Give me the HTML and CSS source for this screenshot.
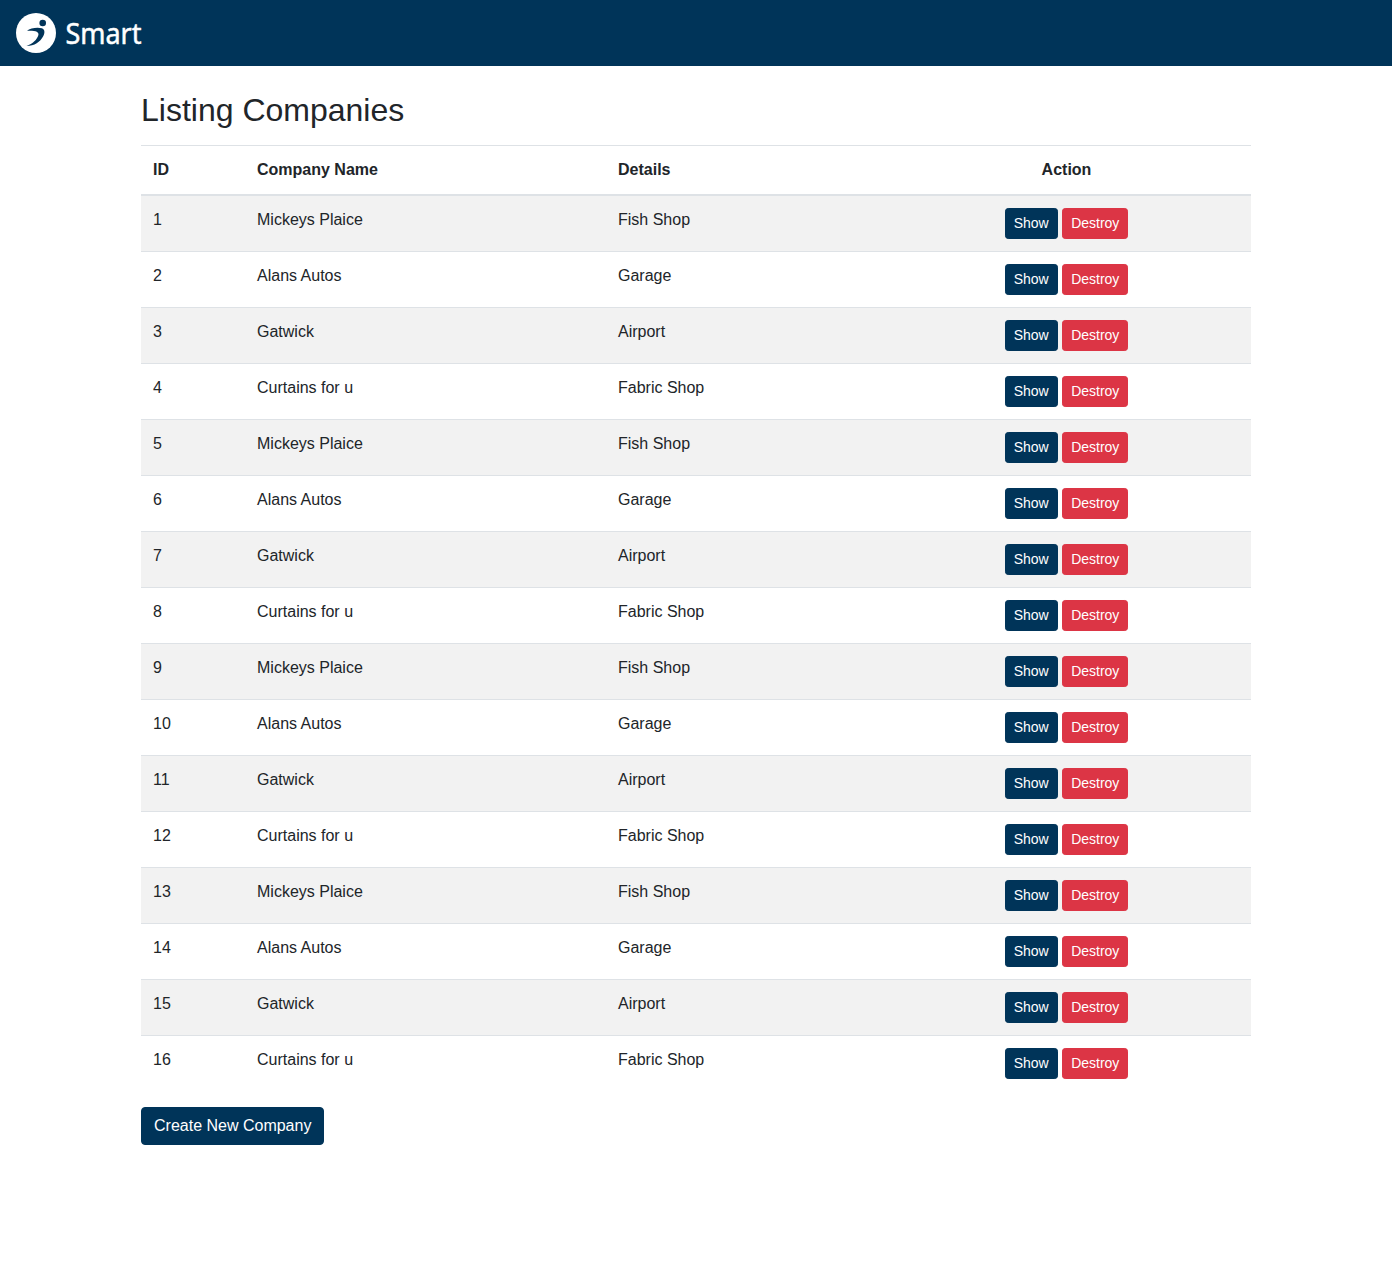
FILE: index.html
```html
<!DOCTYPE html>
<html lang="en">
<head>
<meta charset="utf-8">
<title>Listing Companies</title>
<link rel="stylesheet" href="styles.css">
</head>
<body>
<nav class="navbar">
  <a class="brand" href="#" aria-label="Smart">
    <svg width="130" height="40" viewBox="0 0 130 40">
      <circle cx="20" cy="20" r="20" fill="#fff"/>
      <circle cx="26.7" cy="10" r="3.3" fill="#003459"/>
      <path d="M11 17.800C14 15 21.500 13.900 25.800 15.200C29 16.300 29 19.800 27.200 23.300C24.200 29 18.500 33 10.500 33C17 30.600 21 26.700 22.400 22C23.200 18.800 19.500 17.400 11 17.800Z" fill="#003459"/>
      <text class="brand-text" x="49.500" y="31" textLength="76" lengthAdjust="spacingAndGlyphs">Smart</text>
    </svg>
  </a>
</nav>
<main class="container">
  <h1 class="title">Listing Companies</h1>
  <table class="table">
    <colgroup><col class="col-id"><col class="col-name"><col class="col-details"><col></colgroup>
    <thead>
      <tr><th>ID</th><th>Company Name</th><th>Details</th><th class="actions">Action</th></tr>
    </thead>
    <tbody id="companies"></tbody>
  </table>
  <a class="btn btn-primary" href="#">Create New Company</a>
</main>
<script src="companies.js"></script>
</body>
</html>
```
FILE: styles.css
```css
*, *::before, *::after { box-sizing: border-box; }

body {
  margin: 0;
  font-family: "Liberation Sans", Arial, sans-serif;
  font-size: 16px;
  line-height: 1.5;
  color: #212529;
  background: #fff;
}

.navbar {
  display: flex;
  align-items: center;
  height: 66px;
  padding: 0 16px;
  background: #003459;
}

.brand, .brand svg { display: block; }
.brand svg { overflow: visible; }

.brand-text {
  font-family: "Noto Sans", "Open Sans", sans-serif;
  font-size: 29px;
  fill: #fff;
  stroke: #fff;
  stroke-width: .5px;
  stroke-linejoin: round;
}

.container {
  width: 1140px;
  margin: 25px auto 0;
  padding: 0 15px;
}

.title {
  margin: 0 0 16px;
  font-size: 32px;
  font-weight: 500;
  line-height: 1.2;
}

.table {
  width: 100%;
  margin-bottom: 16px;
  table-layout: fixed;
  border-collapse: collapse;
}

.col-id { width: 104px; }
.col-name { width: 361px; }
.col-details { width: 276px; }

.table th, .table td {
  padding: 12px;
  text-align: left;
  vertical-align: top;
  border-top: 1px solid #dee2e6;
}

.table thead th {
  vertical-align: bottom;
  border-bottom: 2px solid #dee2e6;
}

.table tbody tr:nth-of-type(odd) { background: rgba(0, 0, 0, .05); }

.table .actions { text-align: center; }

.btn {
  display: inline-block;
  padding: 6px 12px;
  border: 1px solid transparent;
  border-radius: 4px;
  font-size: 16px;
  line-height: 1.5;
  color: #fff;
  text-align: center;
  text-decoration: none;
  vertical-align: middle;
}

.btn-sm {
  padding: 4px 8px;
  border-radius: 3.200px;
  font-size: 14px;
}

.btn-primary { background: #003459; border-color: #003459; }
.btn-danger { background: #dc3545; border-color: #dc3545; }
```
FILE: companies.js
```js
const companies = [
  ["Mickeys Plaice", "Fish Shop"],
  ["Alans Autos", "Garage"],
  ["Gatwick", "Airport"],
  ["Curtains for u", "Fabric Shop"]
];

const body = document.getElementById("companies");
for (let id = 1; id <= 16; id++) {
  const [name, details] = companies[(id - 1) % companies.length];
  body.insertAdjacentHTML("beforeend", `
    <tr>
      <td>${id}</td><td>${name}</td><td>${details}</td>
      <td class="actions">
        <a class="btn btn-sm btn-primary" href="#">Show</a>
        <a class="btn btn-sm btn-danger" href="#">Destroy</a>
      </td>
    </tr>`);
}
```
